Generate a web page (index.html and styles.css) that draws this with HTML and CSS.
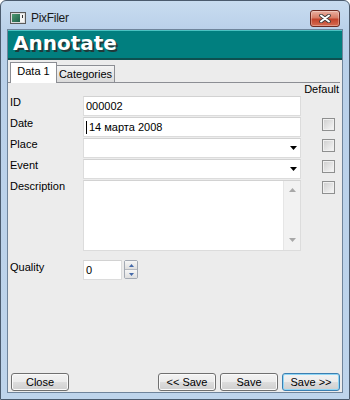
FILE: index.html
```html
<!DOCTYPE html>
<html lang="ru">
<head>
    <meta charset="UTF-8">
    <title>PixFiler</title>
    <link rel="stylesheet" href="styles.css">
</head>
<body>
    <div class="window">
        <div class="titlebar">
            <svg class="app-icon" width="16" height="12" viewBox="0 0 16 12">
                <defs>
                    <linearGradient id="pic" x1="0" y1="0" x2="1" y2="1">
                        <stop offset="0" stop-color="#4f9a72"/>
                        <stop offset="1" stop-color="#1f5f4a"/>
                    </linearGradient>
                </defs>
                <rect x="0.5" y="0.5" width="15" height="11" fill="#dcdcdc" stroke="#5a5a5a"/>
                <rect x="2" y="2" width="8" height="8" fill="url(#pic)"/>
                <rect x="10" y="2" width="4" height="8" fill="#f4f4f4"/>
                <rect x="12" y="3" width="1" height="3" fill="#333"/>
            </svg>
            <span class="title">PixFiler</span>
            <div class="close-x">
                <svg width="12" height="9" viewBox="0 0 12 9">
                    <path d="M2 1.5 L10 7.5 M10 1.5 L2 7.5" stroke="#3a3a3a" stroke-width="3.6" stroke-linecap="round"/>
                    <path d="M2 1.5 L10 7.5 M10 1.5 L2 7.5" stroke="#ffffff" stroke-width="2" stroke-linecap="round"/>
                </svg>
            </div>
        </div>

        <div class="client">
            <div class="header">Annotate</div>

            <div class="tabs">
                <div class="tab active">Data 1</div>
                <div class="tab">Categories</div>
            </div>

            <div class="panel">
                <div class="default-label">Default</div>
                <div class="form">
                    <label>ID</label>
                    <div class="field">000002</div>
                    <span></span>

                    <label>Date</label>
                    <div class="field"><span class="caret"></span>14 марта 2008</div>
                    <span class="check"></span>

                    <label>Place</label>
                    <div class="field select">
                        <svg width="7" height="4" viewBox="0 0 7 4"><polygon points="0,0 7,0 3.5,4" fill="#000"/></svg>
                    </div>
                    <span class="check"></span>

                    <label>Event</label>
                    <div class="field select">
                        <svg width="7" height="4" viewBox="0 0 7 4"><polygon points="0,0 7,0 3.5,4" fill="#000"/></svg>
                    </div>
                    <span class="check"></span>

                    <label>Description</label>
                    <div class="field memo">
                        <div class="vscroll">
                            <svg width="7" height="4" viewBox="0 0 7 4"><polygon points="0,4 7,4 3.5,0" fill="#a8a8a8"/></svg>
                            <svg width="7" height="4" viewBox="0 0 7 4"><polygon points="0,0 7,0 3.5,4" fill="#a8a8a8"/></svg>
                        </div>
                    </div>
                    <span class="check"></span>

                    <label class="quality">Quality</label>
                    <div class="spin-wrap quality">
                        <div class="field spin-input">0</div>
                        <div class="spin">
                            <div class="spin-half">
                                <svg width="5" height="3" viewBox="0 0 5 3"><polygon points="0,3 5,3 2.5,0" fill="#4468a8"/></svg>
                            </div>
                            <div class="spin-half">
                                <svg width="5" height="3" viewBox="0 0 5 3"><polygon points="0,0 5,0 2.5,3" fill="#4468a8"/></svg>
                            </div>
                        </div>
                    </div>
                    <span></span>
                </div>
            </div>

            <div class="footer">
                <button class="btn">Close</button>
                <button class="btn push">&lt;&lt; Save</button>
                <button class="btn">Save</button>
                <button class="btn default">Save &gt;&gt;</button>
            </div>
        </div>
    </div>
</body>
</html>
```

FILE: styles.css
```css
* {
    box-sizing: border-box;
    margin: 0;
    padding: 0;
}

body {
    background: #ffffff;
    font-family: 'Liberation Sans', Arial, sans-serif;
    font-size: 11px;
    color: #000;
}

.window {
    width: 350px;
    height: 400px;
    border: 1px solid #4b5b6e;
    border-radius: 6px 6px 0 0;
    background: linear-gradient(to bottom, #c8dcf0 0%, #b9d0e9 30px, #bed4eb 100%);
    display: flex;
    flex-direction: column;
    overflow: hidden;
}

/* title bar */
.titlebar {
    height: 28px;
    display: flex;
    align-items: flex-start;
    padding: 0 9px 0 9px;
}

.app-icon {
    margin-top: 11px;
    flex-shrink: 0;
}

.title {
    margin-left: 5px;
    margin-top: 10px;
    font-size: 12px;
    line-height: 14px;
    letter-spacing: -0.3px;
    color: #1a1a1a;
}

.close-x {
    margin-left: auto;
    margin-top: 9px;
    width: 30px;
    height: 17px;
    border: 1px solid #6d2a22;
    border-radius: 3px;
    background: linear-gradient(to bottom, #eab0a2 0%, #d87c66 45%, #c2432c 55%, #d66c52 100%);
    box-shadow: inset 0 0 0 1px rgba(255, 255, 255, 0.3);
    display: flex;
    justify-content: center;
    align-items: center;
}

/* client area */
.client {
    flex: 1;
    margin: 0 6px 6px;
    border: 1px solid #6f849b;
    background: #ececec;
    display: flex;
    flex-direction: column;
}

.header {
    height: 30px;
    border-top: 1px solid #4cc2c2;
    border-bottom: 2px solid #0d5050;
    background: #017f7f;
    padding-left: 5px;
    font-family: 'DejaVu Sans', Verdana, sans-serif;
    font-weight: bold;
    font-size: 20px;
    line-height: 24px;
    color: #ffffff;
    text-shadow: 2px 2px 0 #203a3a;
}

.tabs {
    margin-top: 2px;
    padding-left: 2px;
    height: 20px;
    display: flex;
    align-items: flex-end;
}

.tab {
    height: 17px;
    width: 59px;
    margin-left: -1px;
    border: 1px solid #8c8e94;
    border-bottom: none;
    background: linear-gradient(to bottom, #f4f4f4, #dadada);
    text-align: center;
    line-height: 16px;
}

.tab.active {
    width: 47px;
    height: 21px;
    margin-left: 0;
    margin-bottom: -1px;
    background: #ffffff;
    line-height: 17px;
    position: relative;
    z-index: 1;
}

.panel {
    flex: 1;
    margin-right: 2px;
    border-top: 1px solid #8c8e94;
    padding-left: 2px;
}

.default-label {
    text-align: right;
    line-height: 13px;
    padding-right: 1px;
}

.form {
    display: grid;
    grid-template-columns: 73px 218px 34px;
    grid-template-rows: repeat(4, 20px) 71px 28px;
    row-gap: 1px;
}

.form label {
    line-height: 13px;
}

.field {
    background: #ffffff;
    border: 1px solid #dcdcdc;
    border-top-color: #d2d2d2;
    line-height: 18px;
    padding-left: 2px;
    white-space: nowrap;
}

.caret {
    display: inline-block;
    width: 1px;
    height: 13px;
    background: #000;
    vertical-align: -3px;
    margin-right: 2px;
}

.select {
    display: flex;
    justify-content: flex-end;
    align-items: center;
    padding-right: 3px;
}

.memo {
    display: flex;
    justify-content: flex-end;
    padding: 0;
}

.vscroll {
    width: 17px;
    background: #f2f2f2;
    border-left: 1px solid #e6e6e6;
    display: flex;
    flex-direction: column;
    justify-content: space-between;
    align-items: center;
    padding: 7px 0 8px;
}

.check {
    justify-self: end;
    align-self: start;
    margin-top: 1px;
    width: 13px;
    height: 13px;
    border: 1px solid #8e8f8f;
    background: linear-gradient(135deg, #cdcdcd, #f8f8f8);
    box-shadow: inset 0 0 0 1px #f0f0f0;
}

.quality {
    margin-top: 8px;
}

label.quality {
    padding-top: 1px;
}

.spin-wrap {
    display: flex;
    gap: 2px;
    height: 20px;
}

.spin-input {
    width: 39px;
}

.spin {
    width: 14px;
    height: 19px;
    border: 1px solid #a3a9b3;
    border-radius: 2px;
    display: flex;
    flex-direction: column;
}

.spin-half {
    flex: 1;
    display: flex;
    justify-content: center;
    align-items: center;
    background: linear-gradient(to bottom, #f6f6f6, #dedede);
}

.spin-half + .spin-half {
    border-top: 1px solid #b5b9c0;
}

/* bottom buttons */
.footer {
    display: flex;
    gap: 4px;
    padding: 0 2px 1px 3px;
}

.btn {
    width: 58px;
    height: 18px;
    border: 1px solid #707070;
    border-radius: 3px;
    background: linear-gradient(to bottom, #f3f3f3 0%, #ebebeb 50%, #dddddd 50%, #cfcfcf 100%);
    box-shadow: inset 0 0 0 1px #fafafa;
    font-family: 'Liberation Sans', Arial, sans-serif;
    font-size: 11px;
    line-height: 15px;
    color: #000;
}

.btn.push {
    margin-left: auto;
}

.btn.default {
    border-color: #3c7fb1;
    box-shadow: inset 0 0 0 1px #8fd6f6;
}
```
